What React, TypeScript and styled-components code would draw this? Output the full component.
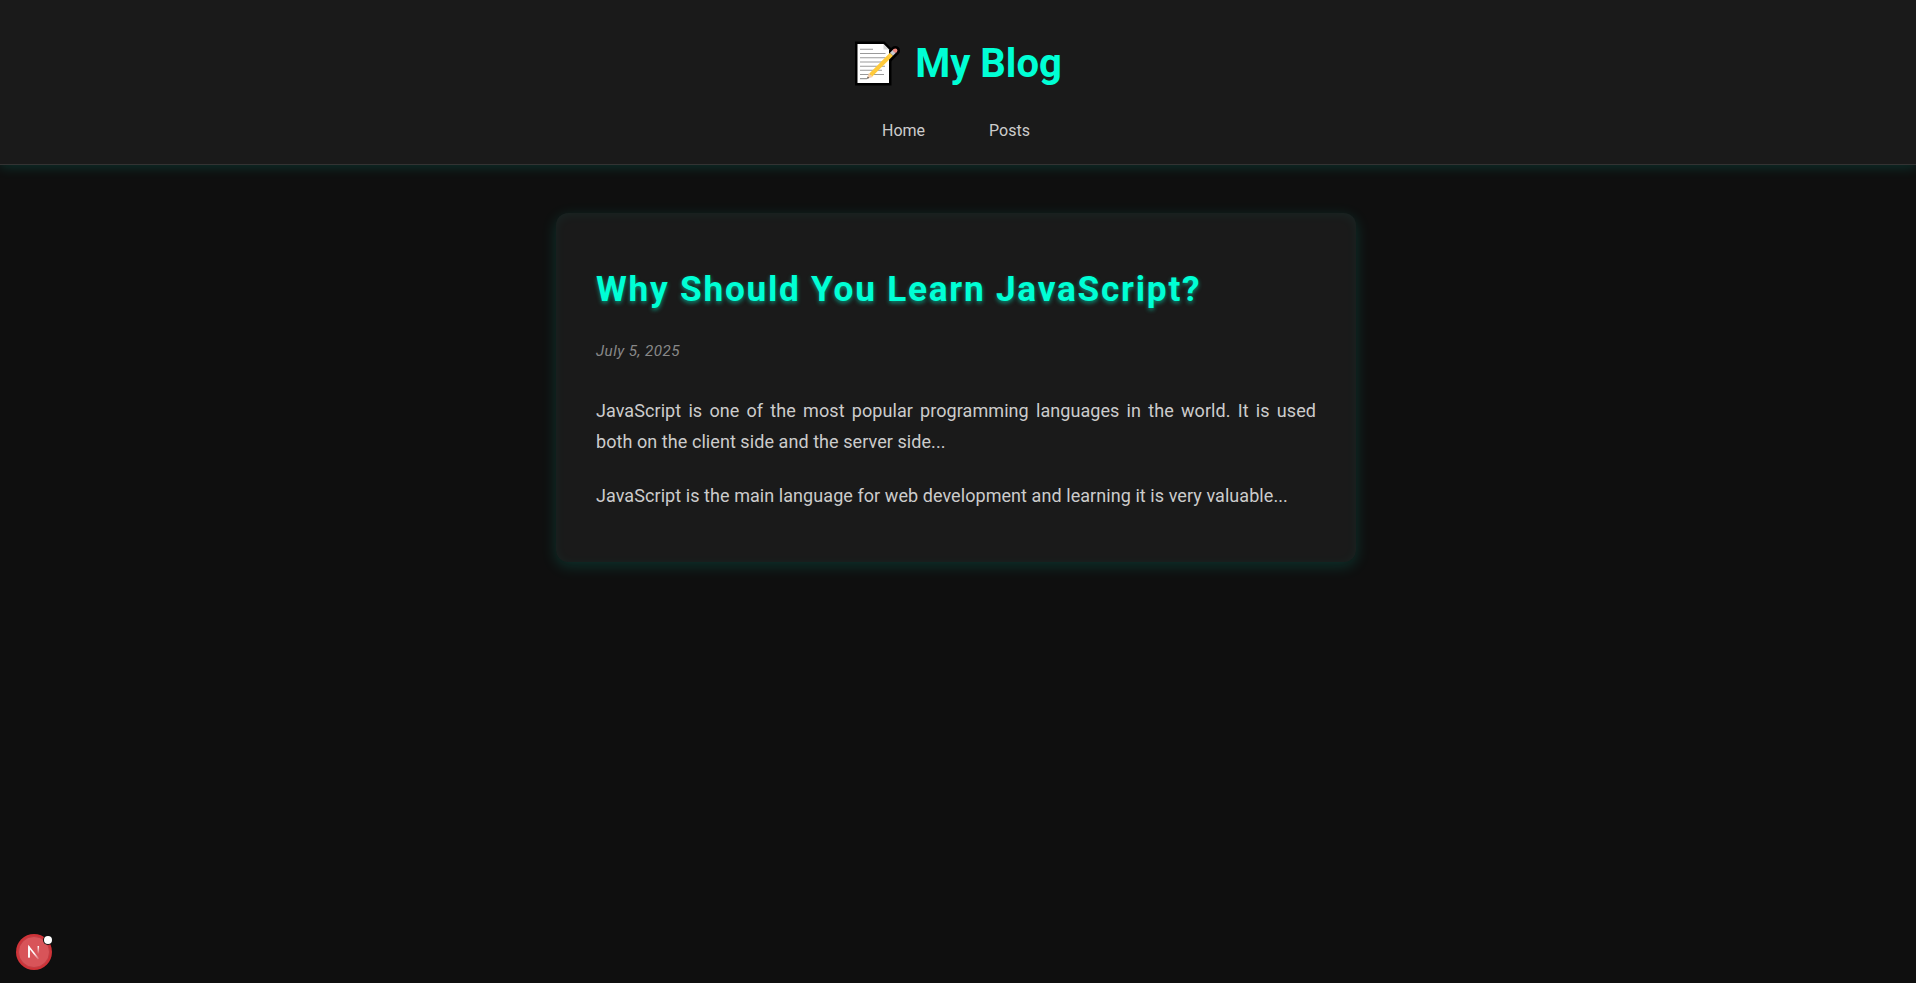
import React from 'react';
import styled, { createGlobalStyle } from 'styled-components';

const GlobalStyle = createGlobalStyle`
  * { box-sizing: border-box; }
  html, body { background: #0f0f0f; }
  body {
    margin: 0;
    min-height: 100vh;
    font-family: Roboto, 'Liberation Sans', sans-serif;
    color: #cccccc;
  }
`;

const Header = styled.header`
  display: flex;
  flex-direction: column;
  align-items: center;
  height: 165px;
  padding-top: 33px;
  background: #1a1a1a;
  border-bottom: 1px solid #333333;
  box-shadow: 0 2px 12px rgba(0, 255, 213, 0.15);
`;

const Brand = styled.h1`
  display: flex;
  align-items: center;
  gap: 14px;
  height: 62px;
  margin: 0 0 0 1px;
  font-size: 40px;
  line-height: 62px;
  font-weight: 700;
  color: #00ffd5;
`;

const MemoIcon = styled.svg`
  width: 46px;
  height: 46px;
  margin-top: -1px;
`;

const Nav = styled.nav`
  display: flex;
  gap: 64px;
  margin: 24px 4px 0 0;
`;

const NavLink = styled.a`
  font-size: 16px;
  line-height: 24px;
  color: #cccccc;
  text-decoration: none;
`;

const Card = styled.article`
  width: 800px;
  height: 349px;
  margin: 48px 0 0 556px;
  padding: 40px;
  border-radius: 12px;
  background: #1a1a1a;
  box-shadow: 0 4px 15px rgba(0, 255, 213, 0.15), inset 0 2px 12px rgba(0, 255, 213, 0.05);
`;

const PostTitle = styled.h2`
  margin: 15px 0 0;
  font-size: 35.2px;
  line-height: 43px;
  font-weight: 700;
  letter-spacing: 0.05em;
  color: #00ffd5;
  text-shadow: 0 2px 4px rgba(0, 255, 213, 0.5);
`;

const PostDate = styled.p`
  margin: 28px 0 32px;
  font-size: 15.2px;
  line-height: 24px;
  font-style: italic;
  letter-spacing: 0.03em;
  color: #888888;
`;

const Paragraph = styled.p`
  margin: 0 0 23px;
  font-size: 18px;
  line-height: 31px;
  letter-spacing: 0.065px;
  text-align: justify;
  color: #cccccc;
`;

const DevBadge = styled.button`
  position: fixed;
  left: 16px;
  bottom: 13px;
  width: 36px;
  height: 36px;
  padding: 0;
  border: 0;
  background: none;
`;

const BadgeArt = styled.svg`
  display: block;
  overflow: visible;
`;

const Memo = () => (
  <MemoIcon viewBox="0 0 46 46" aria-hidden="true">
    <path d="M2.5 3H28.5L34 8.5V42H2.5Z" fill="#000" stroke="#000" strokeWidth="5" />
    <path d="M13 37L40.3 9.7" stroke="#000" strokeWidth="9.5" strokeLinecap="round" />
    <path d="M2.5 3H28.5L34 8.5V42H2.5Z" fill="#fff" />
    <path d="M28.5 3V8.5H34Z" fill="#d8d8d8" />
    <path
      d="M5 8.3H18M5 12.5H30.5M5 16.8H30.5M5 21H30.5M5 25.2H30M5 29.3H27M5 33.5H29M5 37.6H12"
      stroke="#9a9a9a"
      strokeWidth="1.1"
    />
    <path d="M12 37.8L13.8 32L17.8 36Z" fill="#f5cfa9" />
    <path d="M12 37.8L12.7 35.6L14.2 37.1Z" fill="#444" />
    <path d="M15.8 34L36.5 13.3" stroke="#ffca3a" strokeWidth="4.2" />
    <path d="M36.5 13.3L39.2 10.6" stroke="#c8cbd0" strokeWidth="4.2" />
    <path d="M39.2 10.6L40.3 9.5" stroke="#f08a80" strokeWidth="4.2" />
    <circle cx="40.3" cy="9.5" r="2.1" fill="#f08a80" />
  </MemoIcon>
);

const NextBadge = () => (
  <DevBadge aria-label="Open dev tools">
    <BadgeArt width="36" height="36" viewBox="0 0 36 36">
      <defs>
        <linearGradient id="diag" x1="18" y1="19" x2="23" y2="25" gradientUnits="userSpaceOnUse">
          <stop stopColor="#fff" />
          <stop offset="1" stopColor="#fff" stopOpacity="0.1" />
        </linearGradient>
        <linearGradient id="stem" x1="22" y1="12" x2="22" y2="20" gradientUnits="userSpaceOnUse">
          <stop stopColor="#fff" />
          <stop offset="1" stopColor="#fff" stopOpacity="0" />
        </linearGradient>
      </defs>
      <circle cx="18" cy="18" r="18" fill="#cf3338" />
      <circle cx="18" cy="18" r="15.5" fill="#d85459" stroke="#bd3c42" strokeWidth="0.8" />
      <path d="M13 23.5V13L22.5 25" fill="none" stroke="url(#diag)" strokeWidth="1.6" />
      <path d="M13 23.5V12.5" stroke="#fff" strokeWidth="1.6" />
      <path d="M22.3 12V20" stroke="url(#stem)" strokeWidth="1.5" />
      <circle cx="32" cy="6" r="5" fill="#111" />
      <circle cx="32" cy="6" r="4" fill="#fff" />
    </BadgeArt>
  </DevBadge>
);

export default function App() {
  return (
    <>
      <GlobalStyle />
      <Header>
        <Brand>
          <Memo />
          My Blog
        </Brand>
        <Nav>
          <NavLink>Home</NavLink>
          <NavLink>Posts</NavLink>
        </Nav>
      </Header>
      <main>
        <Card>
          <PostTitle>Why Should You Learn JavaScript?</PostTitle>
          <PostDate>July 5, 2025</PostDate>
          <Paragraph>
            JavaScript is one of the most popular programming languages in the world. It is used both on the client side
            and the server side...
          </Paragraph>
          <Paragraph>JavaScript is the main language for web development and learning it is very valuable...</Paragraph>
        </Card>
      </main>
      <NextBadge />
    </>
  );
}
